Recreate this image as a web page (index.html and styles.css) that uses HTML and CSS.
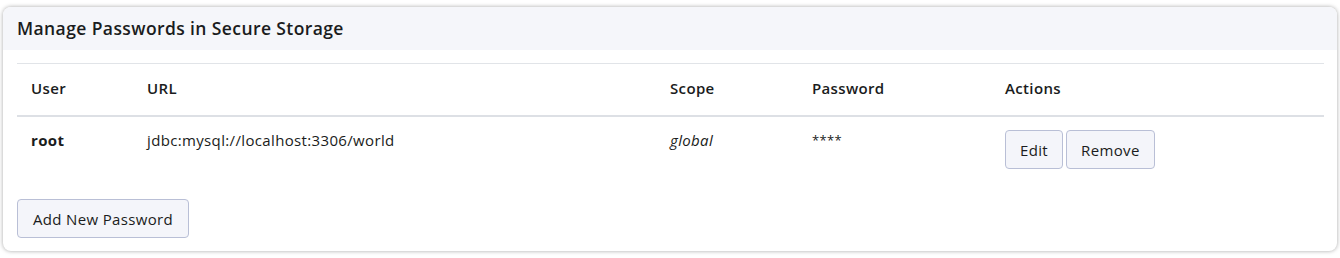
FILE: index.html
```html
<!DOCTYPE html>
<html lang="en">
<head>
  <meta charset="UTF-8">
  <meta name="viewport" content="width=device-width, initial-scale=1.0">
  <title>Manage Passwords in Secure Storage</title>
  <link rel="stylesheet" href="styles.css">
</head>
<body>
<div class="card">
  <div class="card-header">
    <h2>Manage Passwords in Secure Storage</h2>
  </div>
  <div class="card-body">
    <table class="pw-table">
      <colgroup>
        <col class="col-user">
        <col class="col-url">
        <col class="col-scope">
        <col class="col-password">
        <col class="col-actions">
      </colgroup>
      <thead>
        <tr>
          <th>User</th>
          <th>URL</th>
          <th>Scope</th>
          <th>Password</th>
          <th>Actions</th>
        </tr>
      </thead>
      <tbody>
        <tr>
          <td class="user">root</td>
          <td>jdbc:mysql://localhost:3306/world</td>
          <td class="scope">global</td>
          <td class="secret">****</td>
          <td class="actions">
            <button class="btn">Edit</button><button class="btn">Remove</button>
          </td>
        </tr>
      </tbody>
    </table>
    <button class="btn add-btn">Add New Password</button>
  </div>
</div>
</body>
</html>
```

FILE: styles.css
```css
:root {
  --text-color: #1a1c20;
  --header-background: #f5f6fa;
  --border-color: #e1e4e8;
  --button-background: #f4f5fa;
  --button-border: #b9bfd6;
}

body {
  font-family: "Open Sans", "Noto Sans", sans-serif;
  margin: 0;
  padding: 7px 3px 7px 3px;
  background-color: #ffffff;
  color: var(--text-color);
}

.card {
  background-color: #ffffff;
  border-radius: 8px;
  box-shadow: 0 0 4px rgba(0, 0, 0, 0.35);
  overflow: hidden;
}

.card-header {
  background-color: var(--header-background);
  height: 43px;
  padding: 0 14px;
  display: flex;
  align-items: center;
}

.card-header h2 {
  margin: 0 0 2px 0;
  font-size: 17.5px;
  font-weight: 600;
  letter-spacing: 0.4px;
}

.card-body {
  padding: 13px 14px 13px 14px;
}

.pw-table {
  width: 1307px;
  border-collapse: collapse;
  table-layout: fixed;
  font-size: 15px;
  letter-spacing: 0.35px;
}

.col-user { width: 116px; }
.col-url { width: 523px; }
.col-scope { width: 142px; }
.col-password { width: 193px; }

.pw-table th {
  text-align: left;
  font-weight: 600;
  height: 47px;
  padding: 0 14px 4px 14px;
  border-top: 1px solid var(--border-color);
  border-bottom: 2px solid #dde0e5;
}

.pw-table td {
  vertical-align: top;
  padding: 13px 14px 16px 14px;
  line-height: 20px;
}

.pw-table td.user {
  font-weight: 700;
}

.pw-table td.scope {
  font-style: italic;
}

.pw-table td.secret {
  font-size: 13px;
}

.pw-table td.actions {
  padding-top: 13px;
}

.btn {
  font-family: inherit;
  font-size: 15px;
  letter-spacing: 0.35px;
  color: var(--text-color);
  background-color: var(--button-background);
  border: 1px solid var(--button-border);
  border-radius: 4px;
  height: 39px;
  padding: 0 14px;
  margin-right: 3px;
  cursor: pointer;
}

.add-btn {
  margin-top: 14px;
  width: 172px;
  height: 39px;
}
```
